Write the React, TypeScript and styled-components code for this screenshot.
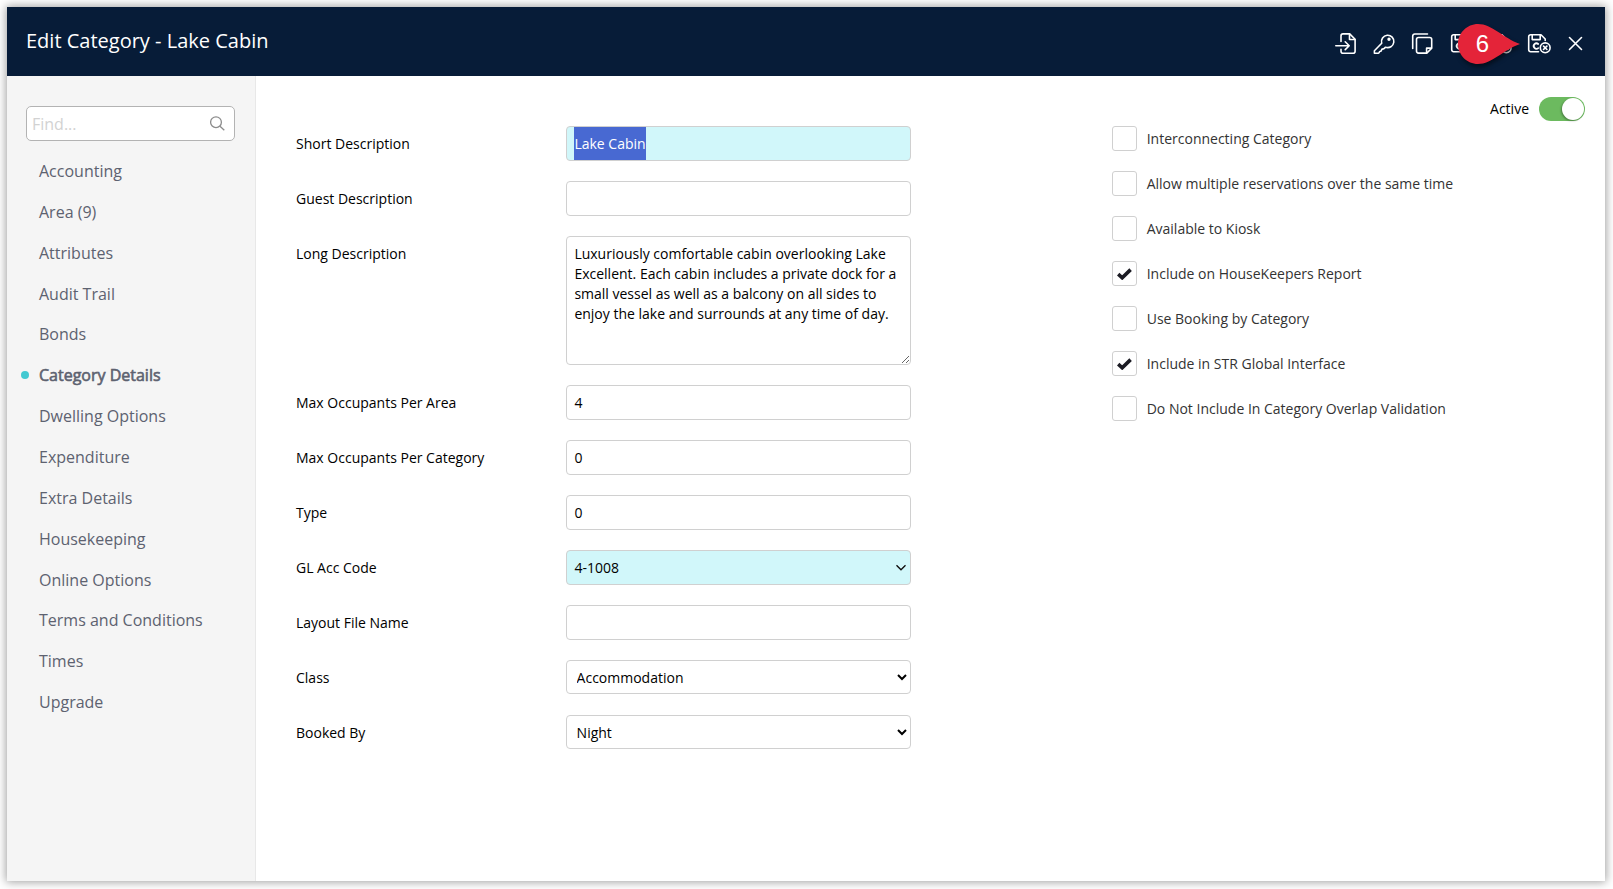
import React from "react";
import styled, { createGlobalStyle } from "styled-components";

const GlobalStyle = createGlobalStyle`
  *, *::before, *::after { box-sizing: border-box; }
  body { margin: 0; background: #fff; font-family: "Open Sans", sans-serif; font-size: 14px; color: #000; overflow: hidden; }
  input, textarea, select, button { font: inherit; color: inherit; }
`;

const Page = styled.div`
  height: 889px;
  padding: 7px 8px 8px 7px;
`;

const Dialog = styled.div`
  display: flex;
  flex-direction: column;
  height: 874px;
  background: #fff;
  box-shadow: 0 0 9px 1px rgba(0, 0, 0, 0.38);
`;

const Header = styled.header`
  display: flex;
  flex: 0 0 69px;
  align-items: center;
  justify-content: space-between;
  padding: 0 22px 0 19px;
  background: #071c38;
  color: #fff;
`;

const Title = styled.h1`
  margin: 0;
  padding-bottom: 2px;
  font-size: 20px;
  font-weight: 400;
  line-height: 28px;
`;

const Toolbar = styled.div`
  position: relative;
  display: flex;
  align-items: center;
  gap: 14.5px;
  padding-top: 5px;
`;

const IconButton = styled.button`
  display: flex;
  width: 24px;
  height: 24px;
  padding: 0;
  border: 0;
  background: none;
  color: #fff;

  svg {
    fill: none;
    stroke: currentColor;
    stroke-width: 1.6;
    stroke-linecap: round;
    stroke-linejoin: round;
    overflow: visible;
  }
`;

const CloseButton = styled(IconButton)`
  width: 15px;
  margin-left: 3px;
`;

const Callout = styled.div`
  position: absolute;
  left: 124px;
  top: -3px;
  width: 62px;
  height: 40px;

  svg {
    display: block;
    overflow: visible;
    filter: drop-shadow(1px 3px 2px rgba(0, 0, 0, 0.5));
  }
`;

const CalloutNumber = styled.span`
  position: absolute;
  inset: 0 auto 0 0;
  width: 49px;
  font: 24px/40px "Liberation Sans", sans-serif;
  text-align: center;
`;

const Body = styled.div`
  display: flex;
  flex: 1;
  min-height: 0;
`;

const Sidebar = styled.aside`
  width: 249px;
  padding: 30px 20px 0 19px;
  border-right: 1px solid #e8e8e8;
  background: #f5f5f5;
`;

const SearchBox = styled.label`
  display: flex;
  align-items: center;
  height: 35px;
  padding: 0 9px 0 5px;
  border: 1px solid #b3b3b3;
  border-radius: 5px;
  background: #fff;
  color: #8c8c8c;

  input {
    flex: 1;
    min-width: 0;
    padding: 0;
    border: 0;
    outline: 0;
    font-size: 16px;
  }
  input::placeholder { color: #d2d2d2; opacity: 1; }
`;

const Nav = styled.nav`
  display: flex;
  flex-direction: column;
  margin-top: 10px;
`;

const NavItem = styled.a<{ $active?: boolean }>`
  position: relative;
  height: 40.86px;
  padding-left: 13px;
  font-size: 16px;
  line-height: 40.86px;
  color: #5d6270;
  -webkit-text-stroke: ${(p) => (p.$active ? "0.6px #5d6270" : "0")};

  &::before {
    content: "";
    display: ${(p) => (p.$active ? "block" : "none")};
    position: absolute;
    left: -5px;
    top: 16px;
    width: 8px;
    height: 8px;
    border-radius: 50%;
    background: #42c9d1;
  }
`;

const Main = styled.main`
  display: flex;
  flex: 1;
  justify-content: space-between;
  padding: 0 20px 0 40px;
`;

const Form = styled.div`
  display: flex;
  flex-direction: column;
  gap: 20px;
  padding-top: 50px;
`;

const Row = styled.div<{ $h?: number }>`
  display: grid;
  grid-template-columns: 270px 345px;
  height: ${(p) => p.$h ?? 35}px;
`;

const Label = styled.label`
  line-height: 35px;
`;

const Field = styled.div<{ $required?: boolean }>`
  display: flex;
  align-items: center;
  justify-content: space-between;
  height: 35px;
  padding: 0 4.5px 0 7px;
  overflow: hidden;
  border: 1px solid #d0d0d0;
  border-radius: 4px;
  background: ${(p) => (p.$required ? "#d1f7fa" : "#fff")};
  line-height: 33px;
`;

const Value = styled.span<{ $selected?: boolean }>`
  padding: 0 0.5px 0 0.4px;
  background: ${(p) => (p.$selected ? "#4869d2" : "transparent")};
  color: ${(p) => (p.$selected ? "#fff" : "#000")};
`;

const TextArea = styled.textarea`
  width: 345px;
  height: 129px;
  padding: 7px 7.4px;
  border: 1px solid #d0d0d0;
  border-radius: 4px;
  outline: 0;
  line-height: 20px;
  resize: both;
`;

const Select = styled.select`
  width: 345px;
  height: 34px;
  padding: 0 0 0 5.6px;
  border: 1px solid #d0d0d0;
  border-radius: 4px;
  background: #fff;
`;

const Options = styled.div`
  display: flex;
  flex-direction: column;
  width: 473px;
  padding-top: 21px;
`;

const ActiveRow = styled.div`
  display: flex;
  align-items: flex-start;
  justify-content: flex-end;
  gap: 10px;
  height: 24px;
  line-height: 24px;
`;

const Toggle = styled.span`
  display: flex;
  justify-content: flex-end;
  width: 46px;
  height: 24px;
  padding: 1px;
  border-radius: 12px;
  background: #6cba5f;

  &::after {
    content: "";
    width: 22px;
    height: 22px;
    border-radius: 50%;
    background: #fff;
    box-shadow: -1px 1px 2px rgba(0, 0, 0, 0.3);
  }
`;

const CheckList = styled.div`
  display: flex;
  flex-direction: column;
  gap: 20px;
  margin-top: 5px;
`;

const CheckRow = styled.label`
  display: flex;
  align-items: center;
  gap: 9.7px;
  height: 25px;
  color: #333;
`;

const CheckBox = styled.span`
  display: flex;
  align-items: center;
  justify-content: center;
  width: 25px;
  height: 25px;
  padding-right: 1px;
  border: 1px solid #d0d0d0;
  border-radius: 3px;
`;

const sections = [
  "Accounting", "Area (9)", "Attributes", "Audit Trail", "Bonds", "Category Details", "Dwelling Options",
  "Expenditure", "Extra Details", "Housekeeping", "Online Options", "Terms and Conditions", "Times", "Upgrade",
];

const checks: [string, boolean][] = [
  ["Interconnecting Category", false],
  ["Allow multiple reservations over the same time", false],
  ["Available to Kiosk", false],
  ["Include on HouseKeepers Report", true],
  ["Use Booking by Category", false],
  ["Include in STR Global Interface", true],
  ["Do Not Include In Category Overlap Validation", false],
];

const description =
  "Luxuriously comfortable cabin overlooking Lake Excellent. Each cabin includes a private dock for a small vessel as well as a balcony on all sides to enjoy the lake and surrounds at any time of day.";

function SaveIcon() {
  return (
    <svg width="24" height="24" viewBox="0 0 24 24">
      <path d="M11.5 19.7H3.600a1.900 1.900 0 0 1-1.900-1.900V4.700a1.900 1.900 0 0 1 1.900-1.900h10.400l4.200 4.200v1.500" />
      <path d="M5.200 3v4.600h8V3" />
      <path d="M11.200 12a2.700 2.700 0 1 0 0 4.100" strokeWidth="1.800" />
      <circle cx="18.200" cy="15.800" r="4.900" />
      <path d="m16.500 14.100 3.400 3.400m0-3.400-3.400 3.400" />
    </svg>
  );
}

function TextRow({ label, value = "" }: { label: string; value?: string }) {
  return (
    <Row>
      <Label>{label}</Label>
      <Field><Value>{value}</Value></Field>
    </Row>
  );
}

export default function App() {
  return (
    <Page>
      <GlobalStyle />
      <Dialog>
        <Header>
          <Title>Edit Category - Lake Cabin</Title>
          <Toolbar>
            <IconButton aria-label="Check in">
              <svg width="24" height="24" viewBox="0 0 24 24">
                <path d="M7 9.500V3.900a2 2 0 0 1 2-2h6.700l5.400 5.400v12a2 2 0 0 1-2 2H9a2 2 0 0 1-2-2v-2" />
                <path d="M15.500 2.200v5.300h5.300" />
                <path d="M1.800 13.700H15m-3.800-3.900 4 3.900-4 3.900" />
              </svg>
            </IconButton>
            <IconButton aria-label="Access">
              <svg width="24" height="24" viewBox="0 0 24 24">
                <path d="M8.700 11.200a6.200 6.200 0 1 1 3.900 4.100c-1 0.300-1.300 1.500-2.400 1.600-1.300 0.100-1.600 0.300-1.700 1.300-0.100 0.900-0.600 1.200-1.600 1.300-0.700 0.100-0.700 1.800-1.700 1.800H1.400v-2.600z" />
                <circle cx="16" cy="7.300" r="0.900" />
              </svg>
            </IconButton>
            <IconButton aria-label="Copy">
              <svg width="24" height="24" viewBox="0 0 24 24">
                <path d="M1.700 16.500V4a2 2 0 0 1 2-2H16.500" />
                <path d="M7.500 5.500h11.200a2 2 0 0 1 2 2v8.700l-4.900 4.900H7.500a2 2 0 0 1-2-2V7.500a2 2 0 0 1 2-2z" />
                <path d="M15.600 20.800v-4.700h4.800" />
              </svg>
            </IconButton>
            <IconButton aria-label="Save"><SaveIcon /></IconButton>
            <IconButton aria-label="Save and new"><SaveIcon /></IconButton>
            <IconButton aria-label="Save and close"><SaveIcon /></IconButton>
            <CloseButton aria-label="Close">
              <svg width="15" height="24" viewBox="0 0 15 24">
                <path d="m1.500 5.500 12 12m0-12-12 12" />
              </svg>
            </CloseButton>
            <Callout>
              <svg width="62" height="40" viewBox="0 0 62 40">
                <path d="M20 0C9 0 0 9 0 20s9 20 20 20c14 0 25-14 42-20C45 14 34 0 20 0z" fill="#e42439" />
              </svg>
              <CalloutNumber>6</CalloutNumber>
            </Callout>
          </Toolbar>
        </Header>
        <Body>
          <Sidebar>
            <SearchBox>
              <input placeholder="Find..." />
              <svg width="15" height="15" viewBox="0 0 15 15" fill="none" stroke="currentColor" strokeWidth="1.300">
                <circle cx="6" cy="6.200" r="5.400" />
                <path d="m10 10.200 4.300 4" />
              </svg>
            </SearchBox>
            <Nav>
              {sections.map((name) => (
                <NavItem key={name} $active={name === "Category Details"}>{name}</NavItem>
              ))}
            </Nav>
          </Sidebar>
          <Main>
            <Form>
              <Row>
                <Label>Short Description</Label>
                <Field $required><Value $selected>Lake Cabin</Value></Field>
              </Row>
              <TextRow label="Guest Description" />
              <Row $h={129}>
                <Label>Long Description</Label>
                <TextArea defaultValue={description} spellCheck={false} />
              </Row>
              <TextRow label="Max Occupants Per Area" value="4" />
              <TextRow label="Max Occupants Per Category" value="0" />
              <TextRow label="Type" value="0" />
              <Row>
                <Label>GL Acc Code</Label>
                <Field $required>
                  <Value>4-1008</Value>
                  <svg width="10" height="7" viewBox="0 0 10 7" fill="none" stroke="#111" strokeWidth="1.400">
                    <path d="m0.500 1.300 4.500 4.500L9.500 1.300" />
                  </svg>
                </Field>
              </Row>
              <TextRow label="Layout File Name" />
              <Row>
                <Label>Class</Label>
                <Select><option>Accommodation</option></Select>
              </Row>
              <Row>
                <Label>Booked By</Label>
                <Select><option>Night</option></Select>
              </Row>
            </Form>
            <Options>
              <ActiveRow>Active<Toggle /></ActiveRow>
              <CheckList>
                {checks.map(([name, on]) => (
                  <CheckRow key={name}>
                    <CheckBox>
                      {on && (
                        <svg width="15" height="13" viewBox="0 0 15 13" fill="none" stroke="#1c1c24" strokeWidth="3.600">
                          <path d="m1.200 7.200 4 3.600 8.400-8.200" />
                        </svg>
                      )}
                    </CheckBox>
                    {name}
                  </CheckRow>
                ))}
              </CheckList>
            </Options>
          </Main>
        </Body>
      </Dialog>
    </Page>
  );
}
